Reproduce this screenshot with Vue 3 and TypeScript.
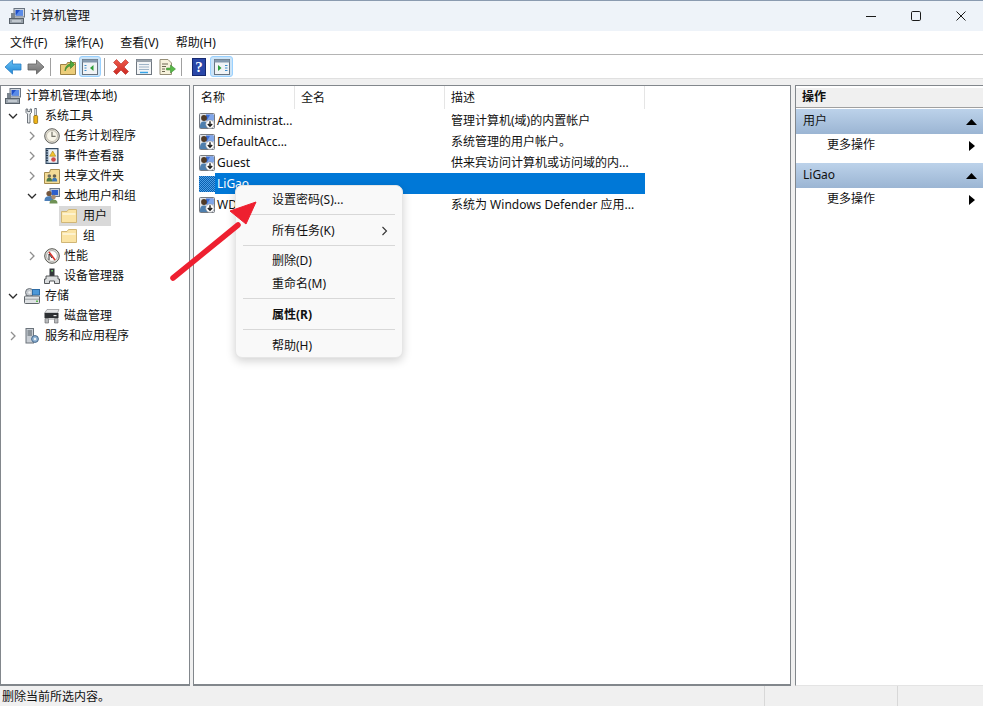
<script setup lang="ts">
interface TreeRow { label: string; icon: string; level: number; chevron?: 'open' | 'closed'; selected?: boolean }
const menus = ['文件(F)', '操作(A)', '查看(V)', '帮助(H)']
const tree: TreeRow[] = [
  { label: '计算机管理(本地)', icon: 'computer', level: 0 },
  { label: '系统工具', icon: 'tools', level: 1, chevron: 'open' },
  { label: '任务计划程序', icon: 'clock', level: 2, chevron: 'closed' },
  { label: '事件查看器', icon: 'log', level: 2, chevron: 'closed' },
  { label: '共享文件夹', icon: 'share', level: 2, chevron: 'closed' },
  { label: '本地用户和组', icon: 'people', level: 2, chevron: 'open' },
  { label: '用户', icon: 'folder', level: 3, selected: true },
  { label: '组', icon: 'folder', level: 3 },
  { label: '性能', icon: 'perf', level: 2, chevron: 'closed' },
  { label: '设备管理器', icon: 'device', level: 2 },
  { label: '存储', icon: 'storage', level: 1, chevron: 'open' },
  { label: '磁盘管理', icon: 'disk', level: 2 },
  { label: '服务和应用程序', icon: 'services', level: 1, chevron: 'closed' },
]
const users = [
  { name: 'Administrat...', desc: '管理计算机(域)的内置帐户' },
  { name: 'DefaultAcc...', desc: '系统管理的用户帐户。' },
  { name: 'Guest', desc: '供来宾访问计算机或访问域的内...' },
  { name: 'LiGao', desc: '', selected: true },
  { name: 'WDAGUtility...', desc: '系统为 Windows Defender 应用...' },
]
const actionGroups = ['用户', 'LiGao']
</script>

<template>
  <div class="win">
    <svg class="defs" width="0" height="0">
      <defs>
        <linearGradient id="gBlue" x1="0" y1="0" x2="0" y2="1"><stop offset="0" stop-color="#6cc4f5"/><stop offset="1" stop-color="#1f86d6"/></linearGradient>
        <linearGradient id="gGrey" x1="0" y1="0" x2="0" y2="1"><stop offset="0" stop-color="#a6a6a6"/><stop offset="1" stop-color="#6f6f6f"/></linearGradient>
        <linearGradient id="gRed" x1="0" y1="0" x2="0" y2="1"><stop offset="0" stop-color="#ee5a4c"/><stop offset="1" stop-color="#cc2a22"/></linearGradient>
        <symbol id="computer" viewBox="0 0 16 16">
          <rect x="5" y="0.500" width="10.500" height="8.500" fill="#cfd6de" stroke="#6a7480"/>
          <rect x="6.500" y="2" width="7.500" height="5.500" fill="#1f4fc8"/>
          <path d="M7 7l4-5h3v5.500H7z" fill="#5a8be8"/>
          <rect x="2" y="5" width="4" height="6" fill="#7b858f"/>
          <rect x="0.500" y="10.500" width="14" height="5" fill="#9aa3ac" stroke="#59626b"/>
          <path d="M3 13h9" stroke="#e8edf2"/>
        </symbol>
        <symbol id="tools" viewBox="0 0 16 16">
          <path d="M2 1v3.500l1.500 1.500v9h2.500V6l1.500-1.500V1L6 1v2.500H3.700V1z" fill="#e6e9eb" stroke="#4e565e" stroke-width=".8"/>
          <rect x="10.800" y="0.500" width="1.800" height="7" fill="#eef1f3" stroke="#5d6670" stroke-width=".7"/>
          <rect x="9.800" y="7.500" width="3.800" height="8" rx="1" fill="#efb416" stroke="#7f5c0c" stroke-width=".7"/>
        </symbol>
        <symbol id="clock" viewBox="0 0 16 16">
          <circle cx="8" cy="8" r="7.300" fill="#e4e1d8" stroke="#5f5f5a"/>
          <circle cx="8" cy="8" r="5.500" fill="#f8f5e9" stroke="#b0ab9b" stroke-width=".7"/>
          <path d="M8 3.800V8.300h3.600" fill="none" stroke="#76746a" stroke-width="1.200"/>
        </symbol>
        <symbol id="log" viewBox="0 0 16 16">
          <rect x="2" y="0.500" width="12" height="15" fill="#8fa6bd" stroke="#34495f"/>
          <rect x="4.500" y="1.500" width="8.500" height="13" fill="#eef1f4"/>
          <path d="M2 2.500h2M2 5h2M2 7.500h2M2 10h2M2 12.500h2" stroke="#1e3044"/>
          <path d="M8.700 3l3 5.200h-6z" fill="#f3c52e" stroke="#a57e10" stroke-width=".6"/>
          <circle cx="9.500" cy="11.500" r="2.300" fill="#cf4a4a"/>
        </symbol>
        <symbol id="share" viewBox="0 0 16 16">
          <path d="M0.500 4.500h5l1-3h9v14H0.500z" fill="#f4dc96" stroke="#a58c50"/>
          <circle cx="5.300" cy="8" r="1.800" fill="#6f6f60"/>
          <path d="M2.500 13.500c0-3.300 1.400-3.800 2.800-3.800s2.800.5 2.800 3.800z" fill="#4b7a4a"/>
          <circle cx="10.500" cy="8" r="1.800" fill="#645f4c"/>
          <path d="M8 13.500c0-3.300 1.200-3.800 2.500-3.800s2.700.5 2.700 3.800z" fill="#3f79b3"/>
        </symbol>
        <symbol id="people" viewBox="0 0 16 16">
          <rect x="6" y="0.500" width="9.500" height="8" fill="#c7d0da" stroke="#6d7884"/>
          <rect x="7.500" y="2" width="6.500" height="5" fill="#2c5fcc"/>
          <circle cx="5" cy="5.500" r="2.600" fill="#75563c"/>
          <path d="M0.500 13c0-4 2-4.800 4.500-4.800S9.500 9 9.500 13z" fill="#4c7fb8"/>
          <circle cx="9.500" cy="9" r="2.300" fill="#a98b6d"/>
          <path d="M5.500 15.500c0-3 1.600-4 4-4s4 1 4 4z" fill="#6f9255"/>
        </symbol>
        <symbol id="folder" viewBox="0 0 16 16">
          <path d="M0.500 3.500v11h15V1.500H7.500L6 3.500z" fill="#fbe4a4" stroke="#d0b677"/>
          <path d="M1.500 5h13v2h-13z" fill="#fdf2cf"/>
        </symbol>
        <symbol id="perf" viewBox="0 0 16 16">
          <circle cx="8" cy="8" r="7.300" fill="#e4e4e0" stroke="#55554f"/>
          <circle cx="8" cy="8" r="5.400" fill="#fff" stroke="#a0a09a" stroke-width=".8"/>
          <path d="M5 4l6 8" stroke="#d9342c" stroke-width="1.600"/>
          <path d="M5 12V6l3 4" fill="none" stroke="#2e2e2e" stroke-width="1"/>
        </symbol>
        <symbol id="device" viewBox="0 0 16 16">
          <rect x="5.500" y="0.500" width="5" height="7.500" fill="#33363a"/>
          <rect x="7.300" y="2" width="1.600" height="1.600" fill="#6ed36a"/>
          <path d="M2 8h12v3h1.500v4.500h-5V13H5.500v2.500h-5V11H2z" fill="#dadcdd" stroke="#45484b" stroke-width=".9"/>
        </symbol>
        <symbol id="storage" viewBox="0 0 16 16">
          <circle cx="5.500" cy="4.500" r="4" fill="#c3c8cd" stroke="#6d7379"/>
          <circle cx="5.500" cy="4.500" r="1.200" fill="#eef0f2"/>
          <rect x="8.500" y="1.500" width="7" height="5.500" fill="#4c98d8" stroke="#2e6ca6"/>
          <rect x="0.500" y="8" width="15" height="7.500" rx="1" fill="#dfe2e4" stroke="#5f656a"/>
          <path d="M1 11.200h14" stroke="#989ea3"/>
          <rect x="12" y="12.500" width="2" height="1.500" fill="#5fbb50"/>
        </symbol>
        <symbol id="disk" viewBox="0 0 16 16">
          <path d="M3 1.500h12L13.500 5H0.700z" fill="#e4e5e6" stroke="#8b8d8f" stroke-width=".7"/>
          <rect x="0.500" y="5" width="14" height="5" fill="#2d3033"/>
          <rect x="9.500" y="7" width="3" height="1.200" fill="#e8e8e8"/>
          <path d="M1 10.500h3.500v4.500H1zM10.500 10.500H14v4.500h-3.500z" fill="#b8babc" stroke="#5e6062" stroke-width=".6"/>
          <path d="M4.500 11h6" stroke="#9a9c9e"/>
        </symbol>
        <symbol id="services" viewBox="0 0 16 16">
          <rect x="2" y="0.500" width="7.500" height="14.500" fill="#c9ced4" stroke="#6b737b"/>
          <path d="M3.500 3h4.500M3.500 5h4.500M3.500 7h4.500" stroke="#4e5860"/>
          <circle cx="11" cy="11" r="3.400" fill="#8fb2d3" stroke="#47698b"/>
          <circle cx="11" cy="11" r="1.200" fill="#eef3f7"/>
        </symbol>
        <symbol id="user" viewBox="0 0 16 16">
          <rect x="0.500" y="0.500" width="15" height="15" rx="1" fill="#dfe3e8" stroke="#767b82"/>
          <rect x="7" y="1.500" width="7.500" height="6" fill="#3c6fd6"/>
          <path d="M8 7l3-5h3.500v5z" fill="#7fa6ea"/>
          <circle cx="5" cy="5" r="2.900" fill="#4f3a26"/>
          <path d="M1 13.500c0-4 1.800-5 4-5s4 1 4 5v1.500H1z" fill="#4e7fae"/>
          <circle cx="11" cy="11.200" r="4.200" fill="#fff" stroke="#8a8f95" stroke-width=".6"/>
          <path d="M11 8.200v4.800M8.800 11l2.200 2.300 2.200-2.300" fill="none" stroke="#1c1c1c" stroke-width="1.400"/>
        </symbol>
        <symbol id="userSel" viewBox="0 0 16 16">
          <pattern id="chk" width="2" height="2" patternUnits="userSpaceOnUse">
            <rect width="2" height="2" fill="#4da0e6"/>
            <rect width="1" height="1" fill="#0a5fae"/>
            <rect x="1" y="1" width="1" height="1" fill="#0a5fae"/>
          </pattern>
          <rect width="16" height="16" fill="url(#chk)"/>
        </symbol>
      </defs>
    </svg>

    <header class="titlebar">
      <svg class="ico16 title-ico"><use href="#computer"/></svg>
      <span class="title">计算机管理</span>
      <div class="caption">
        <svg width="12" height="12" viewBox="0 0 12 12"><path d="M1 6.500h10" stroke="#1a1a1a"/></svg>
        <svg width="12" height="12" viewBox="0 0 12 12"><rect x="1.500" y="1.500" width="9" height="9" rx="1.200" fill="none" stroke="#1a1a1a"/></svg>
        <svg width="12" height="12" viewBox="0 0 12 12"><path d="M1.500 1.500l9 9M10.500 1.500l-9 9" stroke="#1a1a1a"/></svg>
      </div>
    </header>

    <nav class="menubar">
      <span v-for="m in menus" :key="m" class="menuitem">{{ m }}</span>
    </nav>

    <div class="toolbar">
      <svg class="tb mr5" viewBox="0 0 18 18"><path d="M1 9l7.500-7v4H17v6H8.500v4z" fill="url(#gBlue)" stroke="#2a7fc4" stroke-width=".8"/></svg>
      <svg class="tb mr5" viewBox="0 0 18 18"><path d="M17 9l-7.500-7v4H1v6h8.500v4z" fill="url(#gGrey)" stroke="#5f5f5f" stroke-width=".8"/></svg>
      <i class="tsep mr8"></i>
      <svg class="tb mr2" viewBox="0 0 18 18"><path d="M1.500 6.500h6l1-2h8v12h-15z" fill="#eccd79" stroke="#9c8345"/><path d="M6 13c0-4.500 3-7 5.500-7V2.500l4 4-4 4V8c-2.200 0-4 1.700-5.500 5z" fill="#4ea83e" stroke="#2f7a25" stroke-width=".6"/></svg>
      <span class="tbtn mr3"><svg class="tb" viewBox="0 0 18 18"><rect x="1.500" y="1.500" width="15" height="15" fill="#f0f3f6" stroke="#66727f"/><rect x="1.500" y="1.500" width="15" height="3" fill="#8499ae"/><path d="M3.500 7.500h2M3.500 10h2M3.500 12.500h2" stroke="#3c8ecf"/><path d="M12.500 7v6L9 10z" fill="#2f9e3a"/></svg></span>
      <i class="tsep mr7"></i>
      <svg class="tb mr5" viewBox="0 0 18 18"><path d="M1.500 4.500L4.500 1.500 9 6 13.500 1.500 16.500 4.500 12 9l4.500 4.500-3 3L9 12l-4.500 4.500-3-3L6 9z" fill="url(#gRed)" stroke="#b32a24" stroke-width=".6"/></svg>
      <svg class="tb mr5" viewBox="0 0 18 18"><rect x="1.500" y="1.500" width="15" height="15" fill="#f2f4f6" stroke="#6f7780"/><rect x="1.500" y="1.500" width="15" height="2.500" fill="#99a2ab"/><path d="M4 6.500h10M4 9h10M4 11.500h10" stroke="#9fb4c8"/><path d="M5 14.500h8" stroke="#36a3e6" stroke-width="1.500"/></svg>
      <svg class="tb mr5" viewBox="0 0 18 18"><path d="M2 1.500h8l3.500 3.500v11.500H2z" fill="#f7f2dc" stroke="#968f78"/><path d="M4 6h6M4 8.500h4M4 11h3M4 13.500h3" stroke="#6c6650"/><path d="M8.500 10h4V7l5 4-5 4v-3h-4z" fill="#58b947" stroke="#33802a" stroke-width=".5"/></svg>
      <i class="tsep mr8"></i>
      <svg class="tb mr2" viewBox="0 0 18 18"><rect x="2.500" y="0.500" width="13" height="17" fill="#2a47a8" stroke="#16296f"/><text x="9" y="14" text-anchor="middle" class="q">?</text></svg>
      <span class="tbtn wide"><svg class="tb" viewBox="0 0 18 18"><rect x="1.500" y="1.500" width="15" height="15" fill="#f0f3f6" stroke="#66727f"/><rect x="1.500" y="1.500" width="15" height="3" fill="#8499ae"/><path d="M12 7.500h2.500M12 10h2.500M12 12.500h2.500" stroke="#3c8ecf"/><path d="M5 7v6l3.500-3z" fill="#2f9e3a"/></svg></span>
    </div>

    <main class="panes">
      <aside class="pane tree">
        <div v-for="r in tree" :key="r.label" class="node" :class="'lvl' + r.level">
          <span v-if="r.level > 0" class="chev">
            <svg v-if="r.chevron === 'open'" width="10" height="10" viewBox="0 0 10 10"><path d="M1 3l4 4 4-4" fill="none" stroke="#2b2b2b" stroke-width="1.300"/></svg>
            <svg v-else-if="r.chevron === 'closed'" width="10" height="10" viewBox="0 0 10 10"><path d="M3 1l4 4-4 4" fill="none" stroke="#8f8f8f" stroke-width="1.300"/></svg>
          </span>
          <span class="nodebody" :class="{ sel: r.selected }">
            <svg class="ico16"><use :href="'#' + r.icon"/></svg>
            <span class="nodetext">{{ r.label }}</span>
          </span>
        </div>
      </aside>

      <section class="pane list">
        <div class="thead">
          <span class="th c1">名称</span>
          <span class="th c2">全名</span>
          <span class="th c3">描述</span>
        </div>
        <div v-for="u in users" :key="u.name" class="row">
          <svg class="ico16 rowico"><use :href="u.selected ? '#userSel' : '#user'"/></svg>
          <div class="cells" :class="{ selrow: u.selected }">
            <span class="td d1">{{ u.name }}</span>
            <span class="td d3">{{ u.desc }}</span>
          </div>
        </div>
      </section>

      <aside class="pane actions">
        <div class="acthead">操作</div>
        <template v-for="g in actionGroups" :key="g">
          <div class="band">
            <span>{{ g }}</span>
            <svg width="11" height="6" viewBox="0 0 11 6"><path d="M5.500 0L11 6H0z" fill="#000"/></svg>
          </div>
          <div class="more">
            <span>更多操作</span>
            <svg width="6" height="10" viewBox="0 0 6 10"><path d="M0 0l6 5-6 5z" fill="#000"/></svg>
          </div>
        </template>
      </aside>
    </main>

    <footer class="status">
      <span class="st1">删除当前所选内容。</span>
      <span class="st2"></span>
      <span class="st3"></span>
    </footer>

    <div class="ctx">
      <div class="ci">设置密码(S)...</div>
      <hr />
      <div class="ci arrow-item"><span>所有任务(K)</span><svg width="7" height="10" viewBox="0 0 7 10"><path d="M1.500 1l4 4-4 4" fill="none" stroke="#333" stroke-width="1.100"/></svg></div>
      <hr />
      <div class="ci t1">删除(D)</div>
      <div class="ci t2">重命名(M)</div>
      <hr />
      <div class="ci bold">属性(R)</div>
      <hr />
      <div class="ci">帮助(H)</div>
    </div>

    <svg class="annot" width="983" height="706" viewBox="0 0 983 706">
      <path d="M173 278L238 225" stroke="#ee2030" stroke-width="5.500" stroke-linecap="round" fill="none"/>
      <path d="M256 202L230 211 246 224z" fill="#ee2030" stroke="#ee2030" stroke-width="1" stroke-linejoin="round"/>
    </svg>
  </div>
</template>

<style>
html, body { margin: 0; padding: 0; background: #f0f0f0; }
</style>

<style scoped>
.win {
  width: 983px; height: 706px; position: relative; overflow: hidden;
  display: flex; flex-direction: column; background: #f0f0f0;
  font: 12px/16px "Noto Sans", "Noto Sans CJK SC", sans-serif; color: #111;
}
.defs { position: absolute; }
.ico16 { width: 16px; height: 16px; flex: none; display: block; }
.titlebar {
  height: 31px; box-sizing: border-box; flex: none; display: flex; align-items: center;
  padding: 0 0 0 9px; background: #eef3f9; border-top: 1px solid #8a9bb0;
}
.title-ico { margin-right: 5px; }
.caption { margin-left: auto; display: flex; align-items: center; gap: 33px; padding: 0 16px 1px 0; }
.caption svg { display: block; }
.menubar {
  height: 24px; box-sizing: border-box; flex: none; display: flex; align-items: center;
  padding-left: 10px; gap: 17px; background: #fff; border-bottom: 1px solid #b4b4b4;
}
.toolbar {
  height: 24px; flex: none; display: flex; align-items: center; padding-left: 4px;
  background: #fff; border-bottom: 1px solid #e0e0e0; box-sizing: border-box;
}
.tb { width: 18px; height: 18px; display: block; flex: none; }
.mr2 { margin-right: 2px; }
.mr3 { margin-right: 3px; }
.mr5 { margin-right: 5px; }
.mr7 { margin-right: 7px; }
.mr8 { margin-right: 8px; }
.tsep { width: 1px; height: 18px; background: #a0a0a0; }
.tbtn {
  display: flex; align-items: center; justify-content: center; width: 22px; height: 21px; box-sizing: border-box;
  background: #cce4f7; border: 1px solid #99d1ff; border-radius: 3px;
}
.wide { width: 23px; }
.q { font: bold 15px "Liberation Serif", serif; fill: #fff; }

.panes { flex: 1; display: flex; padding-top: 6px; gap: 3px; min-height: 0; }
.pane { background: #fff; box-sizing: border-box; border: 1px solid #82878c; border-bottom-width: 2px; }
.tree { width: 190px; flex: none; }
.node { height: 20px; display: flex; align-items: center; white-space: nowrap; }
.chev { width: 10px; height: 10px; display: flex; flex: none; }
.chev svg { display: block; }
.lvl0 { padding-left: 4px; }
.lvl1 { padding-left: 7px; }
.lvl2 { padding-left: 26px; }
.lvl3 { padding-left: 58px; }
.lvl1 .chev { margin-right: 6px; }
.lvl2 .chev { margin-right: 7px; }
.lvl3 .chev { display: none; }
.nodebody { display: flex; align-items: center; height: 20px; padding: 0 3px 0 0; }
.lvl0 .nodetext { margin-left: 5px; }
.lvl1 .nodetext { margin-left: 5px; }
.lvl2 .nodetext { margin-left: 4px; }
.lvl3 .nodetext { margin-left: 6px; }
.lvl3 .nodebody { padding-left: 2px; padding-right: 4px; }
.sel { background: #d9d9d9; }

.list { flex: 1; min-width: 0; }
.thead { height: 24px; display: flex; align-items: flex-start; }
.th { display: block; height: 23px; line-height: 23px; box-sizing: border-box; padding-left: 6px; border-right: 1px solid #e5e5e5; }
.c1 { width: 101px; padding-left: 7px; }
.c2 { width: 150px; }
.c3 { width: 200px; }
.row { height: 21px; display: flex; align-items: center; padding-left: 5px; }
.cells { width: 430px; height: 21px; display: flex; align-items: center; }
.selrow { background: #0078d7; color: #fff; }
.td { display: block; white-space: nowrap; overflow: hidden; }
.d1 { width: 236px; padding-left: 2px; box-sizing: border-box; }
.d3 { flex: 1; }

.actions { width: 188px; flex: none; margin-left: 1px; border-right: 0; border-bottom-color: #e4e4e4; border-bottom-width: 1px; padding-top: 2px; }
.acthead {
  height: 20px; line-height: 17px; padding-left: 6px; box-sizing: border-box; font-weight: bold;
  background: #f0f0f0; border-bottom: 1px solid #a0a0a0; margin-bottom: 1px;
}
.band {
  height: 25px; box-sizing: border-box; display: flex; align-items: center; justify-content: space-between; padding: 0 6px 2px 7px;
  background: linear-gradient(#bcd2ea, #9bb5d3);
}
.band svg { margin-top: 2px; }
.more {
  height: 29px; display: flex; align-items: center; justify-content: space-between; box-sizing: border-box;
  padding: 0 8px 7px 31px;
}
.more svg { display: block; margin-top: 2px; }

.status { height: 20px; flex: none; display: flex; align-items: center; background: #f0f0f0; }
.st1 { width: 764px; padding-left: 2px; box-sizing: border-box; height: 20px; line-height: 20px; margin-top: 2px; }
.st2 { width: 133px; height: 20px; border-left: 1px solid #d8d8d8; box-sizing: border-box; }
.st3 { flex: 1; height: 20px; border-left: 1px solid #d8d8d8; }

.ctx {
  position: absolute; left: 235px; top: 185px; width: 168px; height: 173px; box-sizing: border-box; padding-top: 3px;
  background: #f9f9f9; border: 1px solid #e6e6e6; border-radius: 7px; box-shadow: 0 3px 10px rgba(0,0,0,.18);
}
.ci { height: 22px; line-height: 22px; padding-left: 36px; }
.t1 { margin-top: -1px; }
.t2 { margin-top: 1px; }
.bold { font-weight: bold; }
.arrow-item { display: flex; align-items: center; justify-content: space-between; padding-right: 14px; }
.arrow-item svg { display: block; }
.ctx hr { margin: 3px 7px 5px 7px; height: 1px; border: 0; background: #d8d8d8; }
.annot { position: absolute; left: 0; top: 0; pointer-events: none; }
</style>
